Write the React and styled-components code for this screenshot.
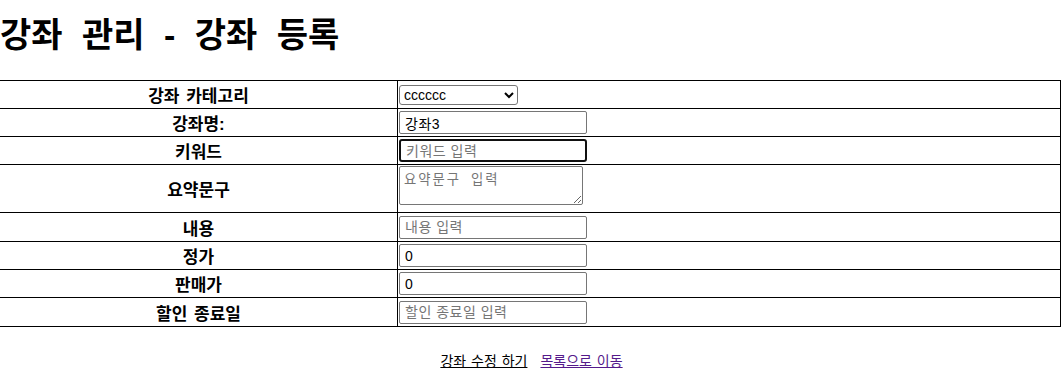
import styled, { createGlobalStyle } from 'styled-components';

const GlobalStyle = createGlobalStyle`
  body {
    margin: 0;
    background: #fff;
    color: #000;
    font-family: 'Liberation Sans', 'Noto Sans CJK KR', sans-serif;
  }
`;

const rows = [
  { label: '강좌 카테고리', kind: 'select', height: 28 },
  { label: '강좌명:', kind: 'input', value: '강좌3', height: 28 },
  { label: '키워드', kind: 'input', placeholder: '키워드 입력', focused: true, height: 28 },
  { label: '요약문구', kind: 'textarea', placeholder: '요약문구 입력', height: 48 },
  { label: '내용', kind: 'input', placeholder: '내용 입력', height: 29 },
  { label: '정가', kind: 'input', value: '0', height: 28 },
  { label: '판매가', kind: 'input', value: '0', height: 28 },
  { label: '할인 종료일', kind: 'input', placeholder: '할인 종료일 입력', height: 29 },
];

const App = () => {
  return (
    <>
      <GlobalStyle />
      <Page>
        <Title>강좌 관리 - 강좌 등록</Title>
        <FormTable>
          <tbody>
            {rows.map((row) => (
              <Row key={row.label} $height={row.height}>
                <Label>{row.label}</Label>
                <Field>
                  {row.kind === 'select' && (
                    <CategorySelect defaultValue="cccccc">
                      <option value="cccccc">cccccc</option>
                    </CategorySelect>
                  )}
                  {row.kind === 'input' && (
                    <TextInput
                      type="text"
                      defaultValue={row.value}
                      placeholder={row.placeholder}
                      $focused={row.focused}
                    />
                  )}
                  {row.kind === 'textarea' && (
                    <SummaryArea placeholder={row.placeholder} />
                  )}
                </Field>
              </Row>
            ))}
          </tbody>
        </FormTable>
        <Actions>
          <ActionLink href="#edit">강좌 수정 하기</ActionLink>
          <ActionLink href="#list" $visited>
            목록으로 이동
          </ActionLink>
        </Actions>
      </Page>
    </>
  );
};

const Page = styled.div`
  display: flex;
  flex-direction: column;
`;

const Title = styled.h1`
  margin: 12px 0 22px;
  font-size: 34px;
  line-height: 46px;
  font-weight: 700;
  word-spacing: 10px;
  white-space: nowrap;
`;

const FormTable = styled.table`
  width: calc(100% - 1px);
  margin-left: -1px;
  border-collapse: collapse;
`;

const Row = styled.tr`
  height: ${({ $height }) => $height}px;
`;

const Label = styled.th`
  width: 397px;
  padding: 0;
  border: 1px solid #000;
  font-size: 17px;
  font-weight: 700;
  text-align: center;
  vertical-align: middle;
  word-spacing: 2px;
`;

const Field = styled.td`
  padding: 0 0 0 1px;
  border: 1px solid #000;
  vertical-align: middle;
  line-height: 0;
`;

const TextInput = styled.input`
  box-sizing: border-box;
  width: 188px;
  height: 23px;
  margin: 0;
  padding: 1px 4px 1px 5px;
  border: ${({ $focused }) => ($focused ? '2px solid #111' : '1px solid #767676')};
  border-radius: ${({ $focused }) => ($focused ? '3px' : '2px')};
  outline: none;
  background: #fff;
  color: #000;
  font-family: 'Liberation Sans', 'Noto Sans CJK KR', sans-serif;
  font-size: 14px;
  letter-spacing: 0.5px;
  &::placeholder {
    color: #757575;
  }
`;

const CategorySelect = styled.select`
  box-sizing: border-box;
  width: 119px;
  height: 20px;
  margin: 0;
  border: 1px solid #767676;
  border-radius: 3px;
  background: #fff;
  color: #000;
  font-family: 'Liberation Sans', 'Noto Sans CJK KR', sans-serif;
  font-size: 14px;
`;

const SummaryArea = styled.textarea`
  box-sizing: border-box;
  width: 184px;
  height: 39px;
  margin: 0 0 6px;
  padding: 2px 4px;
  border: 1px solid #767676;
  border-radius: 2px;
  font-family: 'Liberation Mono', 'Noto Sans CJK KR', monospace;
  font-size: 13.33px;
  letter-spacing: 2px;
  vertical-align: middle;
  &::placeholder {
    color: #757575;
  }
`;

const Actions = styled.div`
  display: flex;
  justify-content: center;
  gap: 13px;
  padding-top: 23px;
  font-size: 14px;
  word-spacing: 1px;
`;

const ActionLink = styled.a`
  color: ${({ $visited }) => ($visited ? '#551a8b' : '#000')};
  text-decoration: underline;
  font-family: 'Liberation Sans', 'Noto Sans CJK KR', sans-serif;
`;

export default App;
